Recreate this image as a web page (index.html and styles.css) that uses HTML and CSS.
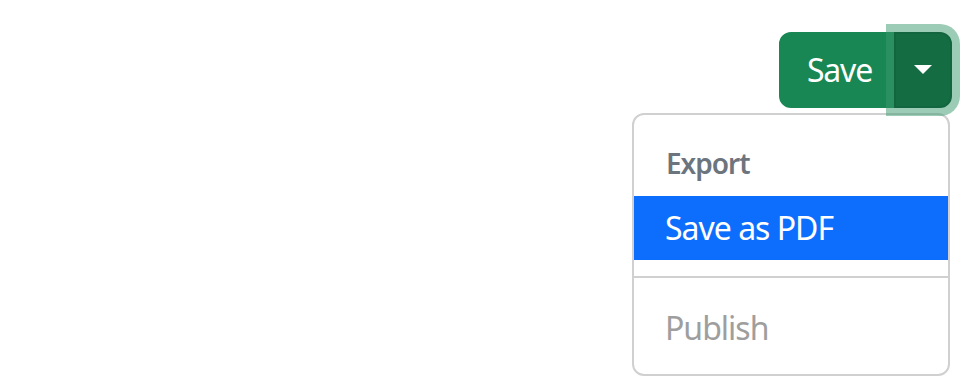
FILE: index.html
```html
<!DOCTYPE html>
<html lang="en">
<head>
<meta charset="utf-8">
<title>Split button</title>
<link rel="stylesheet" href="styles.css">
</head>
<body>
<div class="page">
  <div class="dropdown">
    <div class="btn-group">
      <button class="btn btn-main" type="button">Save</button>
      <button class="btn btn-toggle" type="button" aria-expanded="true"><span class="caret"></span></button>
    </div>
    <ul class="menu">
      <li><h6 class="menu-header">Export</h6></li>
      <li><a class="menu-item active" href="#">Save as PDF</a></li>
      <li><hr class="menu-divider"></li>
      <li><a class="menu-item disabled" href="#">Publish</a></li>
    </ul>
  </div>
</div>
</body>
</html>
```

FILE: styles.css
```css
html, body {
  margin: 0;
  padding: 0;
  background: #fff;
}
body {
  font-family: "Noto Sans", "Open Sans", "Liberation Sans", sans-serif;
  width: 960px;
  height: 390px;
  overflow: hidden;
}
.page {
  display: flex;
  justify-content: flex-end;
  padding: 32px 8px 0 0;
}
.dropdown {
  position: relative;
}
.btn-group {
  display: inline-flex;
}
.btn {
  font-family: inherit;
  font-size: 32px;
  line-height: 48px;
  letter-spacing: -1.2px;
  height: 76px;
  border: 2px solid #198754;
  background: #198754;
  color: #fff;
  margin: 0;
  cursor: pointer;
}
.btn-main {
  padding: 0 22px 0 26px;
  border-radius: 12px 0 0 12px;
  width: 117px;
  text-align: left;
}
.btn-toggle {
  position: relative;
  width: 58px;
  padding: 0;
  margin-left: -2px;
  background: #146c43;
  border-color: #13653f;
  border-radius: 0 12px 12px 0;
  box-shadow: 0 0 0 8px rgba(60, 153, 110, 0.5);
  z-index: 2;
  display: flex;
  align-items: center;
  justify-content: center;
}
.caret {
  display: block;
  width: 0;
  height: 0;
  border-top: 9px solid #fff;
  border-left: 9px solid transparent;
  border-right: 9px solid transparent;
  margin-top: -1px;
}
.menu {
  position: absolute;
  top: 81px;
  right: 2px;
  width: 318px;
  box-sizing: border-box;
  margin: 0;
  padding: 16px 0;
  list-style: none;
  background: #fff;
  border: 2px solid #d0d0d0;
  border-radius: 12px;
  z-index: 1;
}
.menu-header {
  margin: 0;
  padding: 16px 32px;
  font-size: 28px;
  line-height: 33px;
  font-weight: 600;
  letter-spacing: -1px;
  color: #6c757d;
}
.menu-item {
  display: block;
  padding: 8px 31px;
  font-size: 32px;
  line-height: 48px;
  letter-spacing: -1px;
  color: #212529;
  text-decoration: none;
  white-space: nowrap;
}
.menu-item.active {
  background: #0d6efd;
  color: #fff;
}
.menu-item.disabled {
  padding: 10px 31px 6px;
  color: #9e9e9e;
  pointer-events: none;
}
.menu-divider {
  height: 0;
  margin: 16px 0;
  border: 0;
  border-top: 2px solid #d0d0d0;
}
```
